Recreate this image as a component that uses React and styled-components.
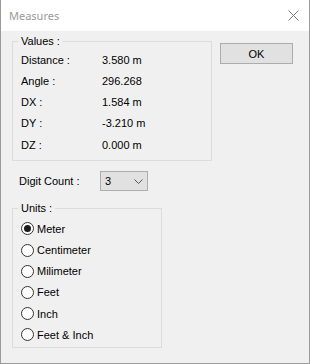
import React from 'react';
import styled, { createGlobalStyle } from 'styled-components';

const Global = createGlobalStyle`
  html, body { margin: 0; padding: 0; background: #fff; }
  body { font-family: "Liberation Sans", Arial, sans-serif; font-size: 11px; color: #000; }
  * { box-sizing: border-box; }
`;

const Window = styled.div`
  width: 310px;
  height: 364px;
  display: flex;
  flex-direction: column;
  border: 1px solid #9b9b9b;
  border-top: none;
  background: #f0f0f0;
`;

const TitleBar = styled.div`
  height: 31px;
  flex: none;
  background: #fff;
  display: flex;
  align-items: center;
  justify-content: space-between;
  padding: 0 10px 0 8px;
`;

const Title = styled.span`
  font-family: "Noto Sans", sans-serif;
  font-size: 11px;
  color: #999;
`;

const Body = styled.div`
  flex: 1;
  display: flex;
  justify-content: space-between;
  align-items: flex-start;
  padding: 0 16px 0 11px;
`;

const LeftColumn = styled.div`
  display: flex;
  flex-direction: column;
  width: 200px;
`;

const Group = styled.fieldset`
  margin: ${p => p.$top}px 0 0 0;
  width: ${p => p.$width}px;
  border: 1px solid #dcdcdc;
  padding: ${p => p.$pad};
  min-width: 0;
`;

const Legend = styled.legend`
  padding: 0 3px;
  margin-left: -3px;
  line-height: 13px;
  font-size: 11px;
`;

const ValueRow = styled.div`
  display: flex;
  align-items: center;
  height: 21.25px;
`;

const Label = styled.span`
  width: ${p => p.$w}px;
  flex: none;
`;

const DigitRow = styled.div`
  display: flex;
  align-items: center;
  height: 20px;
  margin-top: 10px;
  padding-left: 7px;
`;

const Combo = styled.div`
  width: 48px;
  height: 20px;
  background: #e1e1e1;
  border: 1px solid #adadad;
  display: flex;
  align-items: center;
  justify-content: space-between;
  padding: 0 4px 0 4px;
`;

const RadioRow = styled.div`
  display: flex;
  align-items: center;
  height: 21.2px;
  gap: 3px;
`;

const RadioCircle = styled.span`
  width: 13px;
  height: 13px;
  border-radius: 50%;
  border: 1px solid #333;
  background: #fff;
  display: flex;
  align-items: center;
  justify-content: center;
  flex: none;
  &::after {
    content: "";
    width: 7px;
    height: 7px;
    border-radius: 50%;
    background: ${p => (p.$checked ? '#1a1a1a' : 'transparent')};
  }
`;

const Button = styled.button`
  margin-top: 12px;
  width: 73px;
  height: 21px;
  background: #e1e1e1;
  border: 1px solid #adadad;
  font-family: "Liberation Sans", Arial, sans-serif;
  font-size: 11px;
  color: #000;
  padding: 0;
`;

const values = [
  ['Distance :', '3.580 m'],
  ['Angle :', '296.268'],
  ['DX :', '1.584 m'],
  ['DY :', '-3.210 m'],
  ['DZ :', '0.000 m'],
];

const units = ['Meter', 'Centimeter', 'Milimeter', 'Feet', 'Inch', 'Feet & Inch'];

export default function App() {
  return (
    <>
      <Global />
      <Window>
        <TitleBar>
          <Title>Measures</Title>
          <svg width="11" height="11" viewBox="0 0 11 11">
            <path d="M0.5 0.5 L10.5 10.5 M10.5 0.5 L0.5 10.5" stroke="#7a7a7a" strokeWidth="1" fill="none" />
          </svg>
        </TitleBar>
        <Body>
          <LeftColumn>
            <Group $top={4} $width={200} $pad="1px 7px 5px 8px">
              <Legend>Values :</Legend>
              {values.map(([l, v]) => (
                <ValueRow key={l}>
                  <Label $w={81}>{l}</Label>
                  <span>{v}</span>
                </ValueRow>
              ))}
            </Group>
            <DigitRow>
              <Label $w={81}>Digit Count :</Label>
              <Combo>
                <span>3</span>
                <svg width="9" height="5" viewBox="0 0 9 5">
                  <path d="M0.5 0.5 L4.5 4.5 L8.5 0.5" stroke="#555" strokeWidth="1" fill="none" />
                </svg>
              </Combo>
            </DigitRow>
            <Group $top={11} $width={150} $pad="3px 7px 2px 8px">
              <Legend>Units :</Legend>
              {units.map((u, i) => (
                <RadioRow key={u}>
                  <RadioCircle $checked={i === 0} />
                  <span>{u}</span>
                </RadioRow>
              ))}
            </Group>
          </LeftColumn>
          <Button>OK</Button>
        </Body>
      </Window>
    </>
  );
}
